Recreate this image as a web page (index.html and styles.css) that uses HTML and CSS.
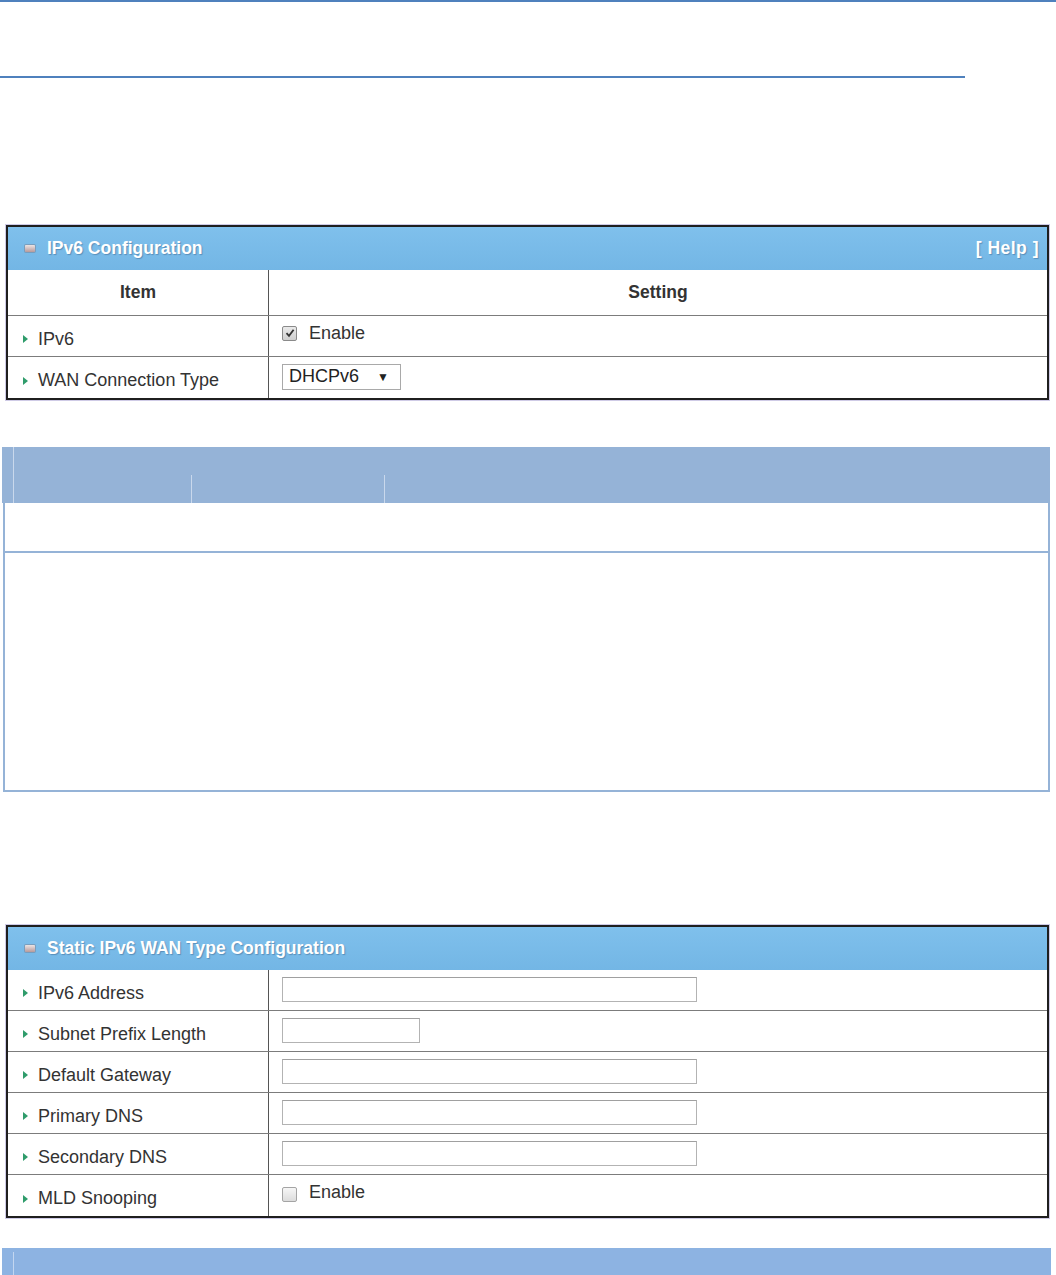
FILE: index.html
```html
<!DOCTYPE html>
<html lang="en">

<head>
    <meta charset="UTF-8">
    <meta name="viewport" content="width=device-width, initial-scale=1.0">
    <title>IPv6 WAN Configuration</title>
    <link rel="stylesheet" href="styles.css">
</head>

<body>

    <!-- Document rules -->
    <div class="rule-top"></div>
    <div class="rule-title"></div>

    <!-- IPv6 Configuration panel -->
    <div class="panel panel-first">
        <div class="panel-head">
            <span class="head-icon"></span>
            <span class="head-title">IPv6 Configuration</span>
            <span class="head-help">[ Help ]</span>
        </div>
        <div class="row row-colhead">
            <div class="cell-label colhead">Item</div>
            <div class="cell-setting colhead">Setting</div>
        </div>
        <div class="row">
            <div class="cell-label"><span class="bullet"></span>IPv6</div>
            <div class="cell-setting">
                <span class="chk checked">
                    <svg width="10" height="10" viewBox="0 0 10 10"><path d="M1.5 5.2 L4 7.8 L8.6 1.8" fill="none" stroke="#333" stroke-width="1.8"/></svg>
                </span>
                <span class="chk-text">Enable</span>
            </div>
        </div>
        <div class="row row-last">
            <div class="cell-label"><span class="bullet"></span>WAN Connection Type</div>
            <div class="cell-setting">
                <span class="select-box">
                    <span>DHCPv6</span>
                    <span class="select-arrow">&#9660;</span>
                </span>
            </div>
        </div>
    </div>

    <!-- Blank document table -->
    <div class="doc">
        <div class="doc-head">
            <div class="dc dc-a"></div>
            <div class="dc dc-b"></div>
            <div class="dc dc-c"></div>
            <div class="dc dc-d"></div>
        </div>
        <div class="doc-row doc-row-short"></div>
        <div class="doc-row doc-row-tall"></div>
    </div>

    <!-- Static IPv6 WAN Type panel -->
    <div class="panel panel-second">
        <div class="panel-head">
            <span class="head-icon"></span>
            <span class="head-title">Static IPv6 WAN Type Configuration</span>
        </div>
        <div class="row">
            <div class="cell-label"><span class="bullet"></span>IPv6 Address</div>
            <div class="cell-setting"><input type="text" class="field field-wide"></div>
        </div>
        <div class="row">
            <div class="cell-label"><span class="bullet"></span>Subnet Prefix Length</div>
            <div class="cell-setting"><input type="text" class="field field-short"></div>
        </div>
        <div class="row">
            <div class="cell-label"><span class="bullet"></span>Default Gateway</div>
            <div class="cell-setting"><input type="text" class="field field-wide"></div>
        </div>
        <div class="row">
            <div class="cell-label"><span class="bullet"></span>Primary DNS</div>
            <div class="cell-setting"><input type="text" class="field field-wide"></div>
        </div>
        <div class="row">
            <div class="cell-label"><span class="bullet"></span>Secondary DNS</div>
            <div class="cell-setting"><input type="text" class="field field-wide"></div>
        </div>
        <div class="row row-last">
            <div class="cell-label"><span class="bullet"></span>MLD Snooping</div>
            <div class="cell-setting">
                <span class="chk"></span>
                <span class="chk-text">Enable</span>
            </div>
        </div>
    </div>

    <!-- Next document table (cut off) -->
    <div class="doc-band">
        <div class="dc dc-a"></div>
        <div class="dc dc-b"></div>
    </div>

</body>

</html>
```

FILE: styles.css
```css
* {
    box-sizing: border-box;
}

body {
    margin: 0;
    padding: 0;
    background-color: #fff;
    font-family: "Liberation Sans", Arial, sans-serif;
    color: #333;
    overflow: hidden;
}

/* Document rules */
.rule-top {
    height: 2px;
    background-color: #4f81bd;
}

.rule-title {
    width: 965px;
    height: 2px;
    margin-top: 74px;
    background-color: #4f81bd;
}

/* Config panels */
.panel {
    width: 1043px;
    margin-left: 6px;
    border: 2px solid #1f1f1f;
    box-shadow: 0 0 0 1px #cfcbe6;
    background-color: #fff;
}

.panel-first {
    margin-top: 147px;
}

.panel-second {
    margin-top: 133px;
}

.panel-head {
    height: 43px;
    display: flex;
    align-items: center;
    padding: 0 8px 0 17px;
    background: linear-gradient(to bottom, #7fc0ec, #73b6e5);
    color: #fff;
    font-weight: bold;
    font-size: 17.5px;
    text-shadow: 1px 1px 1px rgba(50, 90, 130, 0.45);
}

.head-icon {
    width: 10px;
    height: 7px;
    margin-right: 12px;
    border-radius: 1px;
    background: linear-gradient(to bottom, #ece4e4, #b89a9a);
    box-shadow: 0 0 0 1px rgba(120, 90, 90, 0.3);
}

.head-title {
    flex: 1;
}

.head-help {
    letter-spacing: 0.5px;
}

.row {
    display: grid;
    grid-template-columns: 261px 1fr;
    height: 41px;
    border-bottom: 1px solid #7c7c7c;
}

.row-colhead {
    height: 46px;
}

.row-last {
    border-bottom: none;
}

.cell-label {
    display: flex;
    align-items: center;
    padding: 6px 0 0 15px;
    border-right: 1px solid #555;
    font-size: 18px;
}

.cell-setting {
    display: flex;
    align-items: center;
    padding: 0 0 2px 13px;
    font-size: 18px;
}

.colhead {
    justify-content: center;
    padding: 0;
    font-weight: bold;
    font-size: 17.5px;
}

.bullet {
    width: 0;
    height: 0;
    margin-right: 10px;
    border-left: 5px solid #2f9c6b;
    border-top: 4px solid transparent;
    border-bottom: 4px solid transparent;
}

/* Checkbox */
.chk {
    width: 15px;
    height: 15px;
    margin-right: 12px;
    display: flex;
    align-items: center;
    justify-content: center;
    border: 1px solid #a4a4a4;
    border-radius: 2px;
    background: linear-gradient(to bottom, #f6f6f6, #dcdcdc);
}

.chk.checked {
    border-color: #8a8a8a;
    background: linear-gradient(to bottom, #eaeaea, #cfcfcf);
    margin-bottom: 4px;
}

.chk-text {
    margin-bottom: 4px;
}

/* Select */
.select-box {
    width: 119px;
    height: 26px;
    display: flex;
    align-items: center;
    justify-content: space-between;
    padding: 0 11px 0 6px;
    border: 1px solid #a9a9a9;
    background-color: #fff;
    color: #222;
    font-size: 18px;
}

.select-arrow {
    font-size: 12px;
}

/* Text inputs */
.field {
    height: 25px;
    border: 1px solid #b3b3b3;
    border-top-color: #a0a0a0;
    background-color: #fff;
    outline: none;
    font-size: 16px;
}

.field-wide {
    width: 415px;
}

.field-short {
    width: 138px;
}

/* Document tables */
.doc {
    width: 1048px;
    margin-left: 2px;
    margin-top: 47px;
}

.doc-head {
    height: 56px;
    display: flex;
    align-items: flex-end;
    background-color: #95b3d7;
}

.dc {
    height: 100%;
}

.dc-a {
    width: 11px;
}

.dc-b {
    width: 178px;
    border-left: 1px solid #c9d8ec;
}

.dc-c {
    width: 193px;
    height: 28px;
    border-left: 1px solid #c9d8ec;
}

.dc-d {
    flex: 1;
    height: 28px;
    border-left: 1px solid #c9d8ec;
}

.doc-row {
    margin-left: 1px;
    border-left: 2px solid #95b3d7;
    border-right: 2px solid #95b3d7;
    border-bottom: 2px solid #95b3d7;
}

.doc-row-short {
    height: 50px;
}

.doc-row-tall {
    height: 239px;
}

.doc-band {
    width: 1049px;
    height: 27px;
    margin-left: 2px;
    margin-top: 30px;
    display: flex;
    background-color: #8db3e2;
}

.doc-band .dc-b {
    margin-top: 4px;
    height: auto;
    border-left-color: #c3d6f0;
}
```
